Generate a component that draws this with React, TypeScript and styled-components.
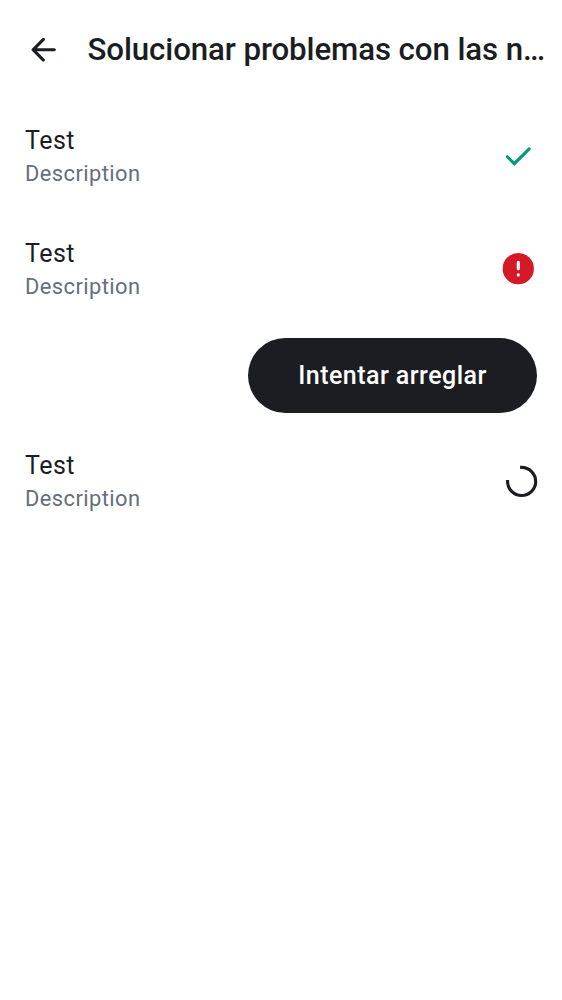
import React from "react";
import styled, { createGlobalStyle } from "styled-components";

const Global = createGlobalStyle`
  *{box-sizing:border-box}
  body{margin:0;background:#fff;font-family:Roboto,sans-serif;color:#1b1d22}
`;
const Screen = styled.main`
  min-height:1000px;
  display:flex;
  flex-direction:column;
  background:#fff;
`;
const TopBar = styled.header`
  height:100px;
  display:flex;
  align-items:center;
  padding:0 12.5px 0 25px;
  gap:25px;
`;
const BackButton = styled.button`
  width:37.5px;
  height:37.5px;
  flex:none;
  padding:0;
  border:0;
  background:none;
  color:inherit;
  svg{display:block}
`;
const Title = styled.h1`
  margin:0;
  flex:1;
  min-width:0;
  font-size:31.25px;
  line-height:44px;
  font-weight:500;
  letter-spacing:-0.1px;
  white-space:nowrap;
`;
const Row = styled.section`
  height:112.5px;
  display:flex;
  align-items:center;
  justify-content:space-between;
  padding:0 25px;
`;
const Labels = styled.div`
  padding-bottom:2.2px;
`;
const Name = styled.div`
  font-size:25px;
  line-height:37px;
  letter-spacing:0.5px;
`;
const Description = styled.div`
  font-size:21.875px;
  line-height:29px;
  letter-spacing:0.43px;
  color:#646f7a;
`;
const Status = styled.svg`
  display:block;
  flex:none;
`;
const Actions = styled.div`
  height:100px;
  padding:12.5px 25px;
  display:flex;
  justify-content:flex-end;
`;
const FixButton = styled.button`
  width:289px;
  height:75px;
  padding:0.5px 0 0;
  border:0;
  border-radius:38px;
  background:#1b1d22;
  color:#fff;
  font:500 25px/37.5px Roboto,sans-serif;
  letter-spacing:0.46px;
`;

const Check = () => (
  <Status width="37.5" height="37.5" viewBox="0.4 0.4 24 24" fill="none">
    <path d="m5.1 12.4 4.45 4.45 9.55-9.5" stroke="#009b78" strokeWidth="2" strokeLinecap="round" />
  </Status>
);
const ErrorIcon = () => (
  <Status width="37.5" height="37.5" viewBox="0.3 0.05 24 24" fill="#d51928">
    <circle cx="12" cy="12" r="10" />
    <path d="M12 8v4M12 16v.01" stroke="#fff" strokeWidth="2" strokeLinecap="round" />
  </Status>
);
const Spinner = () => (
  <Status width="31.25" height="31.25" viewBox="0 0.1 20 20" overflow="visible" fill="none">
    <path d="M10 1A9 9 0 1 1 1 10" stroke="#1b1d22" strokeWidth="2" strokeLinecap="square" />
  </Status>
);

function Test({ children }: { children: React.ReactNode }) {
  return (
    <Row>
      <Labels>
        <Name>Test</Name>
        <Description>Description</Description>
      </Labels>
      {children}
    </Row>
  );
}

export default function App() {
  return (
    <>
      <Global />
      <Screen>
        <TopBar>
          <BackButton aria-label="Atrás">
            <svg width="37.5" height="37.5" viewBox="0.25 0 24 24" fill="currentColor">
              <path d="m7.825 13 4.9 4.9q.3.3.288.7-.013.4-.313.7-.3.275-.7.288-.4.012-.7-.288l-6.6-6.6a.9.9 0 0 1-.213-.325A1.1 1.1 0 0 1 4.425 12q0-.2.062-.375a.9.9 0 0 1 .213-.325l6.6-6.6a.93.93 0 0 1 .687-.275q.413 0 .713.275.3.3.3.713 0 .412-.3.712L7.825 11H19q.425 0 .713.287.287.288.287.713t-.287.713A.97.97 0 0 1 19 13z" />
            </svg>
          </BackButton>
          <Title>Solucionar problemas con las n…</Title>
        </TopBar>
        <Test><Check /></Test>
        <Test><ErrorIcon /></Test>
        <Actions><FixButton>Intentar arreglar</FixButton></Actions>
        <Test><Spinner /></Test>
      </Screen>
    </>
  );
}
